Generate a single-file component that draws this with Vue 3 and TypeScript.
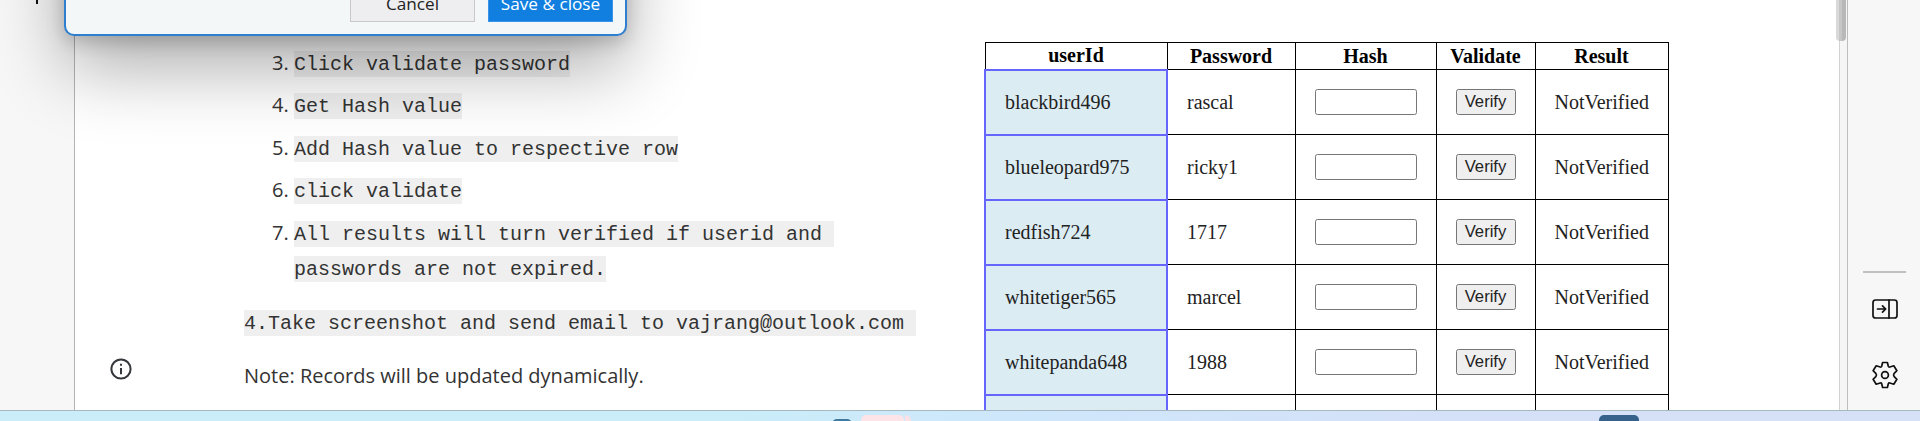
<script setup lang="ts">
interface Account {
  id: string
  password: string
}

const steps: string[] = [
  'Click validate password',
  'Get Hash value',
  'Add Hash value to respective row',
  'click validate',
  'All results will turn verified if userid and passwords are not expired.',
]

const headers: string[] = ['userId', 'Password', 'Hash', 'Validate', 'Result']

const accounts: Account[] = [
  { id: 'blackbird496', password: 'rascal' },
  { id: 'blueleopard975', password: 'ricky1' },
  { id: 'redfish724', password: '1717' },
  { id: 'whitetiger565', password: 'marcel' },
  { id: 'whitepanda648', password: '1988' },
]
</script>

<template>
  <div class="screen">
    <div class="workspace">
      <aside class="rail"><i class="tick"></i></aside>

      <main class="page">
        <div class="gutter">
          <svg class="info" viewBox="0 0 22 22" width="22" height="22">
            <circle cx="11" cy="11" r="9.6" />
            <path d="M11 10v6.200" />
            <path d="M11 5.800v2" />
          </svg>
        </div>

        <section class="notes">
          <ol class="steps" start="3">
            <li v-for="(step, i) in steps" :key="step">
              <span class="num">{{ i + 3 }}.</span>
              <span class="body"><code>{{ step }}</code></span>
            </li>
          </ol>
          <p class="mail"><code>4.Take screenshot and send email to vajrang@outlook.com </code></p>
          <p class="note">Note: Records will be updated dynamically.</p>
        </section>

        <section class="records">
          <table>
            <colgroup>
              <col class="c1" /><col class="c2" /><col class="c3" /><col class="c4" /><col class="c5" />
            </colgroup>
            <thead>
              <tr>
                <th v-for="h in headers" :key="h">{{ h }}</th>
              </tr>
            </thead>
            <tbody>
              <tr v-for="a in accounts" :key="a.id">
                <td class="id">{{ a.id }}</td>
                <td>{{ a.password }}</td>
                <td><input type="text" /></td>
                <td><button type="button">Verify</button></td>
                <td>NotVerified</td>
              </tr>
              <tr>
                <td class="id"></td>
                <td></td>
                <td></td>
                <td></td>
                <td></td>
              </tr>
            </tbody>
          </table>
        </section>
      </main>

      <div class="scroll"><i class="thumb"></i></div>

      <aside class="sidebar">
        <hr />
        <svg class="panel" viewBox="0 0 26 20" width="26" height="20">
          <rect x="1" y="1" width="24" height="18" rx="2.6" />
          <path d="M17 1v18M5.500 10h8M10.500 6.900l3.200 3.100-3.200 3.100" />
        </svg>
        <svg class="gear" viewBox="0 0 26 28" width="26" height="28">
          <path
            d="M10.600 1.500H15.400L16.300 5.200Q16.600 6.200 17.800 6L21.800 4.800L24.900 9.700L22.200 12.300Q20.900 14 22.200 15.700L24.900 18.300L21.800 23.200L17.800 22Q16.600 21.800 16.300 22.800L15.400 26.500H10.600L9.700 22.800Q9.400 21.800 8.200 22L4.200 23.200L1.100 18.300L3.800 15.700Q5.100 14 3.800 12.300L1.100 9.700L4.200 4.800L8.200 6Q9.400 6.200 9.700 5.200Z"
          />
          <circle cx="13" cy="14" r="3.4" />
        </svg>
      </aside>
    </div>

    <footer class="taskbar">
      <i class="app blue"></i>
      <i class="app pink"></i>
      <i class="app edge"></i>
      <i class="app navy"></i>
    </footer>

    <div class="dialog">
      <button type="button" class="cancel">Cancel</button>
      <button type="button" class="save">Save &amp; close</button>
    </div>
  </div>
</template>

<style>
body {
  margin: 0;
  overflow: hidden;
}
</style>

<style scoped>
* {
  box-sizing: border-box;
}
.screen {
  position: relative;
  width: 1920px;
  height: 421px;
  overflow: hidden;
  display: flex;
  flex-direction: column;
  background: #fff;
  color: #333;
  font: 20px/35px "Open Sans", "Noto Sans", sans-serif;
}
.workspace {
  display: flex;
  height: 410px;
  overflow: hidden;
}
.rail {
  width: 75px;
  background: #f7f7f7;
  border-right: 1px solid #b4b4b4;
}
.tick {
  display: block;
  width: 2px;
  height: 4px;
  margin-left: 36px;
  background: #111;
}
.page {
  display: flex;
  width: 1764px;
  height: 410px;
  overflow: hidden;
}
.gutter {
  width: 169px;
  padding: 357.5px 0 0 34.5px;
}
.info {
  display: block;
  fill: none;
  stroke: #34373b;
  stroke-width: 2;
}
.notes {
  width: 740px;
  padding-top: 44.5px;
}
.steps {
  list-style: none;
  margin: 0;
  padding: 0 0 0 28px;
}
.steps li {
  display: flex;
  margin-bottom: 7.5px;
}
.num {
  width: 22px;
  flex: none;
  white-space: nowrap;
}
.body {
  width: 545px;
}
code {
  padding: 2px 0 1px;
  font: 20px/25px "Liberation Mono", "Courier New", monospace;
  background: #efefef;
  white-space: pre-wrap;
}
p {
  margin: 0;
  white-space: nowrap;
}
.mail {
  margin-top: 19px;
}
.note {
  margin-top: 19.5px;
}
table {
  table-layout: fixed;
  border-collapse: collapse;
  width: 683px;
  margin-top: 42px;
  color: #222;
  font: 20px/23px "Liberation Serif", "Times New Roman", serif;
}
.c1 { width: 182px; }
.c2 { width: 128px; }
.c3 { width: 141px; }
.c4 { width: 99px; }
.c5 { width: 133px; }
th,
td {
  border: 1px solid #000;
}
th {
  height: 27px;
  padding: 1px;
  color: #000;
}
td {
  height: 65px;
  padding: 0 0 0 19px;
}
td.id {
  border: 2px solid #66f;
  background: #dcecf3;
}
input,
td button {
  display: block;
  height: 26px;
  margin: 0;
  padding: 0;
  border: 1px solid #767676;
  border-radius: 2.5px;
}
input {
  width: 102px;
  background: #fff;
}
td button {
  width: 60px;
  background: #efefef;
  color: #222;
  font: 16.67px/22px "Liberation Sans", Arial, sans-serif;
}
.scroll {
  width: 9px;
  background: #f5f5f5;
  border-left: 1px solid #d2d2d2;
  border-right: 1px solid #bdbdbd;
}
.thumb {
  display: block;
  width: 10px;
  height: 41px;
  margin-left: -4px;
  background: linear-gradient(90deg, #d9d9d9 0 3px, #c6c6c6 3px 6px, #b8b8b8 6px);
  border-radius: 0 0 4px 4px;
}
.sidebar {
  width: 72px;
  padding-top: 271px;
  background: #f7f7f7;
}
hr {
  width: 43px;
  height: 2px;
  margin: 0 0 0 15px;
  border: 0;
  background: #bfbfbf;
}
.sidebar svg {
  display: block;
  margin-left: 23.5px;
  fill: none;
  stroke: #111;
  stroke-width: 1.7;
  stroke-linejoin: round;
  stroke-linecap: round;
}
.sidebar .panel {
  margin-top: 26px;
}
.sidebar .gear {
  margin-top: 41.5px;
}
.taskbar {
  position: relative;
  height: 11px;
  border-top: 1px solid #a7b8bf;
  background: linear-gradient(90deg, #caedf9 0%, #caedf9 38%, #cfe6fb 55%, #d5e1f8 75%, #d6e0f7 100%);
}
.app {
  position: absolute;
  top: 4px;
  height: 12px;
  border-radius: 5px 5px 0 0;
}
.blue { left: 832px; top: 8px; width: 20px; background: #4079a0; }
.pink { left: 861px; width: 43px; background: #fde4e8; }
.edge { left: 905px; width: 6px; background: #fbe0e5; border-radius: 0 6px 0 0; }
.navy { left: 1599px; width: 40px; background: #35618a; }
.dialog {
  position: absolute;
  left: 64px;
  top: -300px;
  width: 563px;
  height: 336px;
  display: flex;
  align-items: flex-end;
  justify-content: flex-end;
  gap: 13px;
  padding: 0 12px 12px;
  border: 2px solid #2f7fd0;
  border-radius: 10px;
  background: #f4f7f7;
  box-shadow: 0 32px 72px rgba(0, 0, 0, 0.32), 0 6px 18px rgba(0, 0, 0, 0.18);
}
.dialog button {
  width: 125px;
  height: 40px;
  padding: 3px 0 0;
  border: 1px solid #c9c9cb;
  background: #eeeef1;
  color: #222;
  font: 17.2px/35px "Open Sans", "Noto Sans", sans-serif;
}
.dialog .save {
  border-color: #3a93e8;
  background: #107fe0;
  color: #fff;
}
</style>
